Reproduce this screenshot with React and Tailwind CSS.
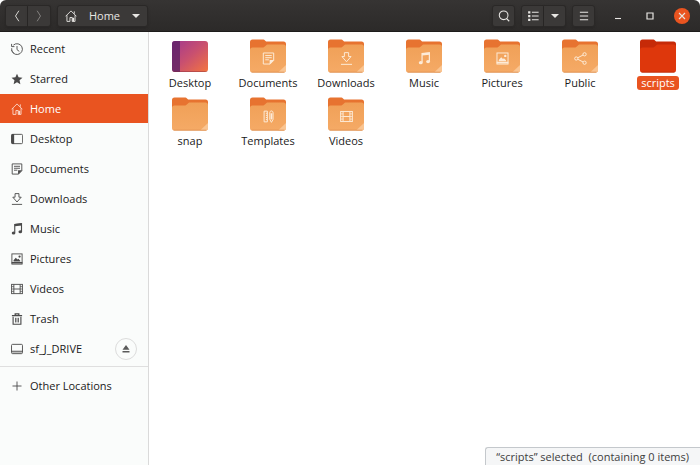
import React, { useState } from 'react';
import clsx from 'clsx';

const Icon = ({ children, className = 'size-3' }) => (
  <svg viewBox="0 0 16 16" fill="none" stroke="currentColor" strokeWidth="1.2" className={clsx('shrink-0', className)} aria-hidden="true">
    {children}
  </svg>
);

const glyphs = {
  recent: (
    <>
      <path d="M3.2 2.8A7.2 7.2 0 1 1 .9 7" />
      <path d="M.9 9.5a7.2 7.2 0 0 0 3 4.3" strokeDasharray="2 1" />
      <path d="M.8 1.2v3.6h3.8M8 4v4.8l3 2.4" />
    </>
  ),
  starred: <path d="M8 1l2.1 4.8 5.2.5-3.9 3.5 1.1 5.1L8 12.2l-4.5 2.7 1.1-5.1L.7 6.3l5.2-.5z" fill="currentColor" stroke="none" />,
  home: (
    <>
      <path d="M.8 8.4L8 1.2l7.2 7.2M2.6 7v8.2h4V10h3v5.2h3.8V7M12.4 5V1.8" />
      <path d="M9.8 10.4h2.4v4.8H9.8z" fill="currentColor" stroke="none" />
    </>
  ),
  desktop: (
    <>
      <rect x=".7" y="1.8" width="14.8" height="12.4" rx="1.6" />
      <path d="M.4 3.2c0-1 .6-1.8 1.6-1.8h2.2v13.2H2c-1 0-1.6-.8-1.6-1.8z" fill="currentColor" stroke="none" />
    </>
  ),
  documents: (
    <>
      <path d="M1.6 1.2h12.8v9.2l-4.4 4.4H1.6z" />
      <path d="M4 4.4h8M4 7h8M4 9.6h4.5" />
      <path d="M9.4 15.4V9.8h5.4z" fill="currentColor" stroke="none" />
    </>
  ),
  downloads: <path d="M5.4.8h5.2v4.8h3L8 12 2.4 5.600h3zM1.2 15.200h13.6" />,
  music: (
    <>
      <path d="M5 13V2l9-1v10.5" strokeWidth="1.5" />
      <path d="M5 1.4l9.6-1v3L5 4.4z" fill="currentColor" stroke="none" />
      <ellipse cx="3.4" cy="13.2" rx="2.4" ry="2" fill="currentColor" stroke="none" />
      <ellipse cx="12.4" cy="11.8" rx="2.4" ry="2" fill="currentColor" stroke="none" />
    </>
  ),
  pictures: (
    <>
      <rect x="1.2" y="1.2" width="13.6" height="13.6" />
      <path d="M.8 13h14.4" strokeWidth="2" />
      <path d="M3.4 11.4V9.8l3-3.4 2.2 2.2 1.2-1 2.6 2.6v1.2z" fill="currentColor" stroke="none" />
      <circle cx="11.4" cy="4.8" r="1.5" fill="currentColor" stroke="none" />
    </>
  ),
  videos: (
    <>
      <rect x=".8" y="1.8" width="14.4" height="12.4" />
      <path d="M3.8 2v12M12.2 2v12M3.8 8h8.4" />
      <path d="M.8 4.8h3M.8 8h3M.8 11.2h3M12.2 4.8h3M12.2 8h3M12.2 11.2h3" strokeWidth=".9" />
    </>
  ),
  trash: (
    <>
      <path d="M2.8 5v10h10.4V5" strokeWidth="1.5" />
      <path d="M1.2 3.6h13.6M5.6 3.2V1.2h4.8v2" strokeWidth="1.7" />
      <path d="M6 6.4v6.2M8 6.4v6.2M10 6.4v6.2" strokeWidth="1.1" />
    </>
  ),
  drive: (
    <>
      <rect x=".7" y="1.8" width="14.6" height="12.4" rx="1.4" />
      <path d="M.8 11h14.4" />
      <path d="M1 11.4h14v2.2H1z" fill="currentColor" stroke="none" opacity=".35" />
    </>
  ),
  plus: <path d="M8 2v12M2 8h12" />,
  templates: (
    <>
      <path d="M2.6 1.4h4v13.2h-4zM4.8 4h1.6M4.8 6.6h1.6M4.8 9.2h1.6M4.8 11.8h1.6" />
      <path d="M9.6 3.4c0-3 4-3 4 0v8.2l-2 3.6-2-3.6z" />
      <path d="M10.6 4h2v7.6h-2z" fill="currentColor" stroke="none" />
    </>
  ),
  share: (
    <>
      <circle cx="2.8" cy="8" r="2" />
      <circle cx="13" cy="2.8" r="2" />
      <circle cx="13" cy="13.2" r="2" />
      <path d="M4.6 7.1L11.2 3.7M4.6 8.9l6.6 3.4" />
    </>
  ),
};

const places = [
  { name: 'Recent', icon: 'recent' },
  { name: 'Starred', icon: 'starred' },
  { name: 'Home', icon: 'home' },
  { name: 'Desktop', icon: 'desktop' },
  { name: 'Documents', icon: 'documents' },
  { name: 'Downloads', icon: 'downloads' },
  { name: 'Music', icon: 'music' },
  { name: 'Pictures', icon: 'pictures' },
  { name: 'Videos', icon: 'videos' },
  { name: 'Trash', icon: 'trash' },
  { name: 'sf_J_DRIVE', icon: 'drive', ejectable: true },
];

const folders = [
  { name: 'Desktop' },
  { name: 'Documents', emblem: 'documents' },
  { name: 'Downloads', emblem: 'downloads' },
  { name: 'Music', emblem: 'music' },
  { name: 'Pictures', emblem: 'pictures' },
  { name: 'Public', emblem: 'share' },
  { name: 'scripts' },
  { name: 'snap' },
  { name: 'Templates', emblem: 'templates' },
  { name: 'Videos', emblem: 'videos' },
];

const DesktopIcon = () => (
  <svg viewBox="0 0 36 34" className="h-[34px] w-9" aria-hidden="true">
    <defs>
      <linearGradient id="desk" x1="0" y1="0" x2="1" y2="1">
        <stop offset="0" stopColor="#a2388f" />
        <stop offset=".5" stopColor="#c9506f" />
        <stop offset="1" stopColor="#f4753f" />
      </linearGradient>
      <clipPath id="deskClip">
        <rect y="2" width="36" height="31" rx="3" />
      </clipPath>
    </defs>
    <g clipPath="url(#deskClip)">
      <rect y="2" width="36" height="31" fill="url(#desk)" />
      <path d="M0 2h8v31H0z" fill="#5c2266" opacity=".8" />
      <path d="M0 32.5h36" stroke="#7a2a40" opacity=".4" />
    </g>
  </svg>
);

const FolderIcon = ({ selected }) => (
  <svg viewBox="0 0 36 34" className="h-[34px] w-9" aria-hidden="true">
    <defs>
      <linearGradient id="folder" x1="0" y1="0" x2="0" y2="1">
        <stop offset="0" stopColor="#f0a057" />
        <stop offset="1" stopColor="#f5aa66" />
      </linearGradient>
    </defs>
    <path d="M0 3a2.5 2.5 0 0 1 2.5-2.5h10c1.6 0 2 .4 2.8 1.2l.8.8h17.4A2.5 2.5 0 0 1 36 5v12H0z" fill={selected ? '#c62a08' : '#e77330'} />
    <path
      d="M0 11a2.5 2.5 0 0 1 2.5-2.5h9.8c1.4 0 1.9-.4 2.8-1.2l.9-.9c.6-.6 1-.9 2-.9h15.5A2.5 2.5 0 0 1 36 8v23a2.5 2.5 0 0 1-2.5 2.5h-31A2.5 2.5 0 0 1 0 31z"
      fill={selected ? '#de370c' : 'url(#folder)'}
    />
    {!selected && <path d="M36 26v5a2.5 2.5 0 0 1-2.5 2.5H28z" fill="#fac592" />}
    <path d="M1.5 33.2h33" stroke={selected ? '#b52a08' : '#d88746'} strokeWidth=".7" />
  </svg>
);

const FolderItem = ({ folder, selected, onSelect }) => (
  <button onClick={onSelect} className="flex h-[58px] flex-col items-center gap-[3px]">
    <span className="grid place-items-center">
      <span className="col-start-1 row-start-1">
        {folder.name === 'Desktop' ? <DesktopIcon /> : <FolderIcon selected={selected} />}
      </span>
      {folder.emblem && (
        <span className="col-start-1 row-start-1 pt-1 text-[#fdebd8]">
          <Icon className="size-[13px]">{glyphs[folder.emblem]}</Icon>
        </span>
      )}
    </span>
    <span className={clsx('rounded-[3px] px-1 leading-[14px]', selected && 'bg-[#e95420] text-white')}>{folder.name}</span>
  </button>
);

const headerButton = 'flex h-[22px] items-center justify-center border border-[#2a2827] bg-[#3b3938] shadow-sm';

const Caret = () => (
  <svg viewBox="0 0 8 4" className="h-1 w-2" fill="currentColor" aria-hidden="true">
    <path d="M0 0h8L4 4z" />
  </svg>
);

const HeaderBar = () => (
  <header className="flex h-8 shrink-0 items-center justify-between rounded-t-md border-b border-[#1d1c1b] bg-linear-to-b from-[#363433] to-[#2c2a29] px-[5px] text-[#e8e6e3]">
    <div className="flex gap-1.5">
      <div className="flex">
        <button aria-label="Back" className={clsx(headerButton, 'w-[23px] rounded-l-[3px]')}>
          <Icon>
            <path d="M10.5 1L6 8l4.5 7" />
          </Icon>
        </button>
        <button aria-label="Forward" disabled className={clsx(headerButton, 'w-[23px] rounded-r-[3px] border-l-0 text-[#8b8987]')}>
          <Icon>
            <path d="M5.5 1L10 8l-4.5 7" />
          </Icon>
        </button>
      </div>
      <button className={clsx(headerButton, 'w-[91px] gap-3 rounded-[3px]')}>
        <Icon>{glyphs.home}</Icon>
        <span>Home</span>
        <Caret />
      </button>
    </div>

    <div className="flex items-center">
      <div className="flex gap-1.5">
        <button aria-label="Search" className={clsx(headerButton, 'w-[23px] rounded-[3px]')}>
          <Icon>
            <circle cx="7.5" cy="7" r="5.8" strokeWidth="1.4" />
            <path d="M11.5 11.5l3.5 3.5" strokeWidth="1.6" />
          </Icon>
        </button>
        <div className="flex">
          <button aria-label="List view" className={clsx(headerButton, 'w-[23px] rounded-l-[3px]')}>
            <Icon>
              <path d="M1.5 3h3M1.5 8h3M1.5 13h3" strokeWidth="3" />
              <path d="M6.5 3h9M6.5 8h9M6.5 13h9" strokeWidth="1.4" />
            </Icon>
          </button>
          <button aria-label="View options" className={clsx(headerButton, 'w-[22px] rounded-r-[3px] border-l-0')}>
            <Caret />
          </button>
        </div>
        <button aria-label="Menu" className={clsx(headerButton, 'w-[23px] rounded-[3px]')}>
          <Icon>
            <path d="M2.5 3h11M2.5 8h11M2.5 13h11" strokeWidth="1.4" />
          </Icon>
        </button>
      </div>
      <div className="flex items-center gap-4 pr-[5px] pl-[15px]">
        <button aria-label="Minimize" className="flex size-4 items-center justify-center">
          <Icon className="size-2">
            <path d="M2 13h12" strokeWidth="2.2" />
          </Icon>
        </button>
        <button aria-label="Maximize" className="flex size-4 items-center justify-center">
          <Icon className="size-2">
            <path d="M2 2h12v12H2z" strokeWidth="2.4" />
          </Icon>
        </button>
        <button aria-label="Close" className="flex size-4 items-center justify-center rounded-full bg-[#e95420]">
          <Icon className="size-2">
            <path d="M2 2l12 12M14 2L2 14" strokeWidth="2.2" />
          </Icon>
        </button>
      </div>
    </div>
  </header>
);

const Sidebar = ({ current, onChange }) => (
  <nav className="w-[149px] shrink-0 border-r border-[#dadada] bg-[#fafcfb] pt-0.5">
    <ul className="flex flex-col gap-px border-b border-[#dfdfdf] pb-[3px]">
      {places.map((place) => {
        const active = place.name === current;
        return (
          <li key={place.name} className={clsx('flex h-[29px] items-center pr-[11px]', active && 'bg-[#e95420] text-white')}>
            <button onClick={() => onChange(place.name)} className="flex h-full flex-1 items-center gap-[7px] pl-[11px]">
              <span className={active ? 'text-[#fbd9cb]' : 'text-[#4a4a4a]'}>
                <Icon>{glyphs[place.icon]}</Icon>
              </span>
              {place.name}
            </button>
            {place.ejectable && (
              <button aria-label="Eject" className="flex size-[22px] items-center justify-center rounded-full border border-[#dcdcdc] text-[#5a5a5a]">
                <Icon className="size-2">
                  <path d="M8 0l7 9.5H1zM1 12h14v3H1z" fill="currentColor" stroke="none" />
                </Icon>
              </button>
            )}
          </li>
        );
      })}
    </ul>
    <button className="mt-1 flex h-[29px] w-full items-center gap-[7px] pl-[11px]">
      <span className="text-[#4a4a4a]">
        <Icon>{glyphs.plus}</Icon>
      </span>
      Other Locations
    </button>
  </nav>
);

const App = () => {
  const [place, setPlace] = useState('Home');
  const [selected, setSelected] = useState('scripts');

  return (
    <div className="flex min-h-screen flex-col bg-white font-['Open_Sans','Noto_Sans',sans-serif] text-[11px] leading-4 font-medium text-[#1a1a1a]">
      <HeaderBar />
      <div className="flex flex-1">
        <Sidebar current={place} onChange={setPlace} />
        <main className="relative flex-1">
          <div className="grid grid-cols-[repeat(auto-fill,78px)] px-0.5 pt-[7px]">
            {folders.map((folder) => (
              <FolderItem
                key={folder.name}
                folder={folder}
                selected={selected === folder.name}
                onSelect={() => setSelected(folder.name)}
              />
            ))}
          </div>
          {/* Floating status */}
          <div className="absolute right-0 bottom-0 rounded-tl-[3px] border-t border-l border-[#c4c8cc] bg-[#f5f6f7] pr-[11px] pl-[10px] leading-[17px] whitespace-pre text-[#3d3d3d]">
            {`“${selected}” selected  (containing 0 items)`}
          </div>
        </main>
      </div>
    </div>
  );
};

export default App;
